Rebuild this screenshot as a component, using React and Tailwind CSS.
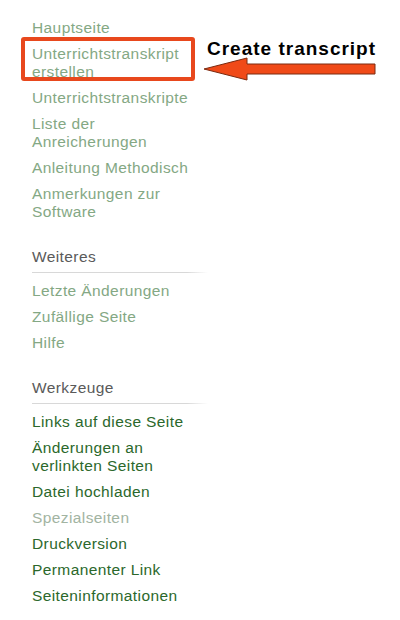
const navigation = [
  { label: 'Hauptseite' },
  { label: 'Unterrichtstranskript erstellen' },
  { label: 'Unterrichtstranskripte' },
  { label: 'Liste der Anreicherungen' },
  { label: 'Anleitung Methodisch' },
  { label: 'Anmerkungen zur Software' },
];

const weiteres = ['Letzte Änderungen', 'Zufällige Seite', 'Hilfe'];

const werkzeuge = [
  { label: 'Links auf diese Seite', tone: 'dark' },
  { label: 'Änderungen an verlinkten Seiten', tone: 'dark' },
  { label: 'Datei hochladen', tone: 'dark' },
  { label: 'Spezialseiten', tone: 'muted' },
  { label: 'Druckversion', tone: 'dark' },
  { label: 'Permanenter Link', tone: 'dark' },
  { label: 'Seiteninformationen', tone: 'dark' },
];

function Portlet({ title, children }) {
  return (
    <div className="mt-[27px]">
      <h3 className="pb-[6px] text-[#5a5a5a] font-normal">{title}</h3>
      <div className="h-px w-[176px] bg-gradient-to-r from-[#d8d8d8] from-88% to-white" />
      <ul className="pt-[9px] flex flex-col gap-2">{children}</ul>
    </div>
  );
}

export default function App() {
  return (
    <div
      className="relative w-[400px] h-[620px] bg-white overflow-hidden text-[15.5px] leading-[18px] tracking-[0.4px]"
      style={{ fontFamily: '"Liberation Sans", Arial, sans-serif' }}
    >
      <nav className="pl-8 pt-[19px] w-[220px]">
        <ul className="flex flex-col gap-2 w-[166px]">
          {navigation.map((item) => (
            <li key={item.label}>
              <a className="text-[#84a884]">{item.label}</a>
            </li>
          ))}
        </ul>

        <Portlet title="Weiteres">
          {weiteres.map((label) => (
            <li key={label}>
              <a className="text-[#84a884]">{label}</a>
            </li>
          ))}
        </Portlet>

        <Portlet title="Werkzeuge">
          {werkzeuge.map((item) => (
            <li key={item.label} className="w-[166px]">
              <a className={item.tone === 'dark' ? 'text-[#2b682b]' : 'text-[#a2b4a2]'}>{item.label}</a>
            </li>
          ))}
        </Portlet>
      </nav>

      {/* annotation overlay */}
      <div className="absolute left-[21px] top-[37px] w-[174px] h-[44px] border-4 border-[#e8481d] rounded-[3px]" />
      <div className="absolute left-[207px] top-[38px] text-[19px] leading-[22px] font-bold tracking-[1px] text-black">
        Create transcript
      </div>
      <svg className="absolute left-0 top-0" width="400" height="620" viewBox="0 0 400 620">
        <polygon
          points="204,69 247,58 247,64 375,64 375,74 247,74 247,80"
          fill="#f04a18"
          stroke="#7a2a10"
          strokeWidth="1"
          strokeLinejoin="round"
        />
      </svg>
    </div>
  );
}
